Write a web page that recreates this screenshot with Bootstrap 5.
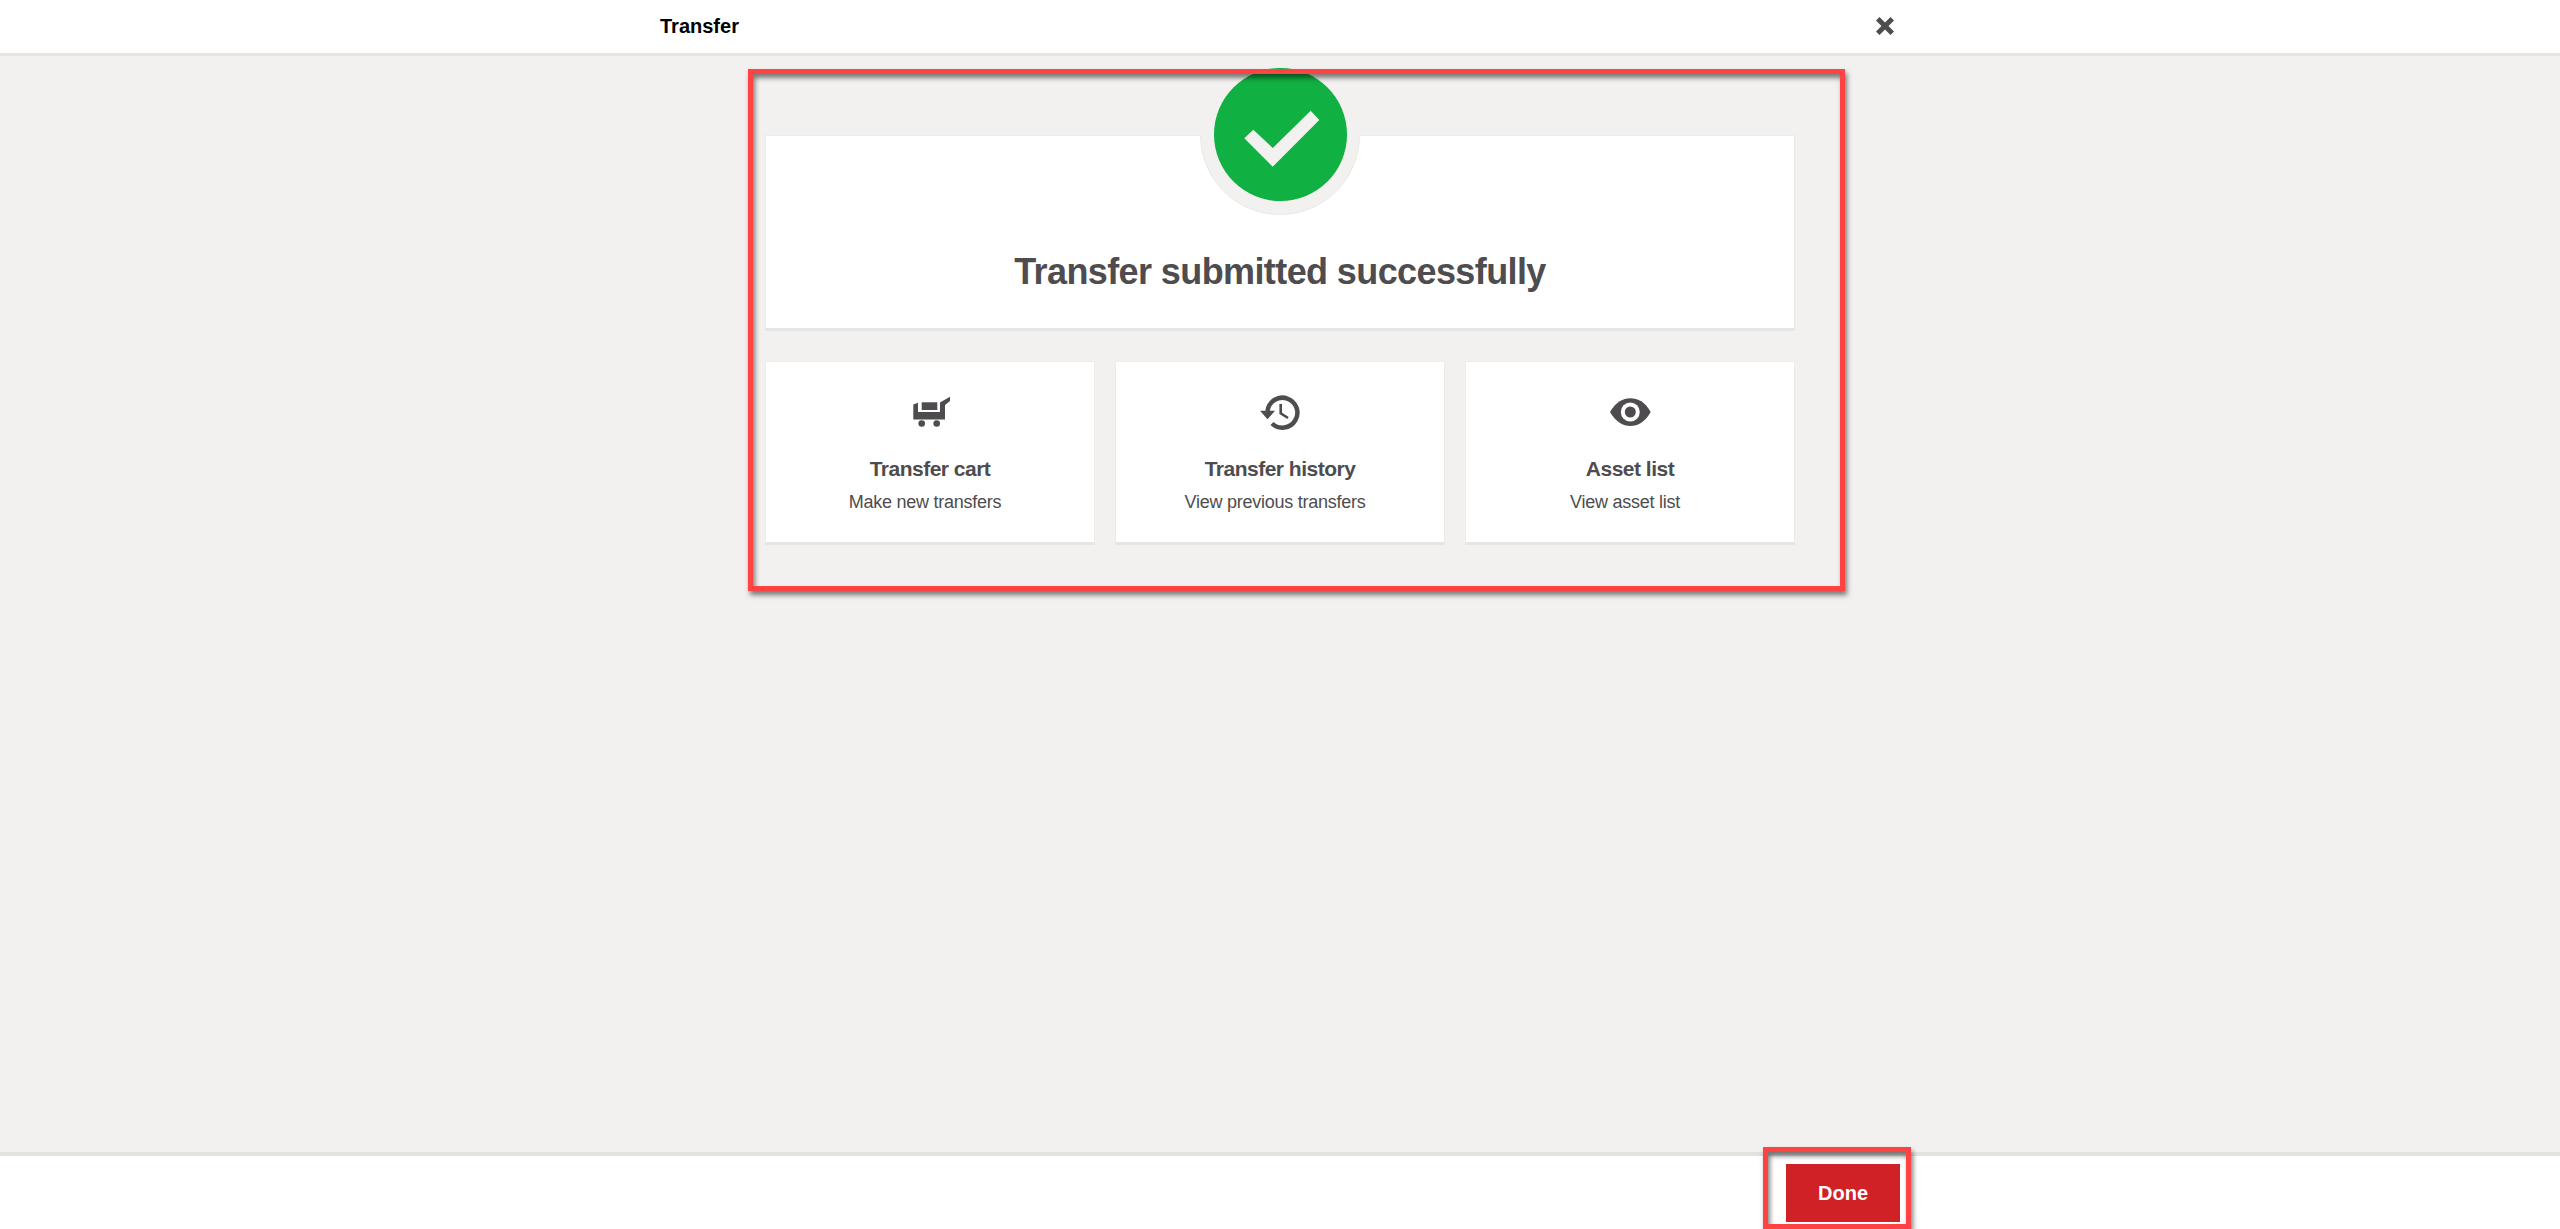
<!DOCTYPE html>
<html lang="en">
<head>
<meta charset="utf-8">
<title>Transfer</title>
<link href="https://cdn.jsdelivr.net/npm/bootstrap@5.3.0/dist/css/bootstrap.min.css" rel="stylesheet">
<style>
html,body{height:100%;}
body{font-family:"Liberation Sans",Arial,sans-serif;background:#f2f1ef;color:#4e4c4e;overflow:hidden;}
.page-shell{height:1229px;}
.top-bar{height:56px;background:#fff;border-bottom:3px solid #e6e5e3;}
.bar-inner{width:1240px;}
.top-bar .bar-inner{padding-bottom:2px;}
.top-title{font-size:20px;font-weight:700;color:#000;}
.close-x{margin-right:6px;line-height:0;}
.content-area{padding-top:79px;}
.content-wrap{width:1030px;}
.panel{border:1px solid #ecebe9;border-bottom:3px solid #e6e5e3;border-radius:0;background:#fff;}
.hero-panel{height:196px;padding-top:114px;}
.hero-title{font-size:36px;letter-spacing:-.6px;font-weight:700;line-height:44px;margin:0;color:#4e4c4e;}
.badge-ring{left:50%;top:-81px;width:160px;height:160px;margin-left:-80px;border-radius:50%;background:#f2f1ef;border:1px solid #e9e8e6;clip-path:inset(80px -2px -2px -2px);}
.badge-circle{left:50%;top:-68px;width:133px;height:133px;margin-left:-66px;border-radius:50%;background:#10b042;}
.tile-row{gap:20px;margin-top:30px;}
.tile{width:330px;height:184px;padding-top:18px;}
.tile svg{display:block;margin:0 auto;}
.tile-title{font-size:21px;letter-spacing:-.5px;font-weight:700;line-height:26px;margin-top:16px;color:#4e4c4e;}
.tile-sub{font-size:18px;letter-spacing:-.25px;line-height:24px;margin-top:8px;padding-right:10px;color:#4e4c4e;}
.mark-box{border:5px solid #ff4343;box-shadow:2px 4px 5px rgba(0,0,0,.5),inset 2px 4px 5px rgba(0,0,0,.5);pointer-events:none;}
.mark-main{left:-17px;right:-50px;top:-66px;bottom:-46px;}
.mark-done{left:-23px;right:-11px;top:-17px;bottom:-7px;}
.bottom-bar{height:77px;background:#fff;border-top:4px solid #e3e2de;padding-top:8px;}
.done-btn{width:114px;height:58px;padding:0;background:#d02126;border:0;border-radius:0;color:#fff;font-size:20px;font-weight:700;}
.done-btn:hover{background:#d02126;color:#fff;}
</style>
</head>
<body>
<div class="page-shell d-flex flex-column">
  <header class="top-bar d-flex justify-content-center flex-shrink-0">
    <div class="bar-inner d-flex justify-content-between align-items-center">
      <span class="top-title">Transfer</span>
      <span class="close-x" aria-label="Close">
        <svg width="18" height="18" viewBox="0 0 18 18"><path d="M0 3.500 3.500 0 9 5.500 14.500 0 18 3.500 12.500 9 18 14.500 14.500 18 9 12.500 3.500 18 0 14.500 5.500 9Z" fill="#4e4c4e"/></svg>
      </span>
    </div>
  </header>
  <main class="content-area flex-grow-1">
    <div class="content-wrap mx-auto position-relative">
      <div class="card panel hero-panel position-relative text-center">
        <div class="badge-ring position-absolute"></div>
        <div class="badge-circle position-absolute">
          <svg width="133" height="133" viewBox="-66 -67 133 133"><polygon points="-35.700,3.300 -26.700,-5.300 -7.300,13 30.700,-24.300 39.300,-15 -7.300,31.700" fill="#f2f1ef"/></svg>
        </div>
        <h1 class="hero-title">Transfer submitted successfully</h1>
      </div>
      <div class="tile-row d-flex">
        <div class="card panel tile text-center">
          <svg width="80" height="60" viewBox="0 0 80 60" fill="#4e4c4e">
            <path d="M23.300 24.500 28 22.700V32H50V22.500L60 16.800V21L55 25V39.500H23.300Z"/>
            <rect x="31.700" y="22.300" width="15.600" height="7.700"/>
            <circle cx="31.700" cy="43.500" r="3.300"/><circle cx="46.700" cy="43.500" r="3.300"/>
          </svg>
          <div class="tile-title">Transfer cart</div>
          <div class="tile-sub">Make new transfers</div>
        </div>
        <div class="card panel tile text-center">
          <svg width="80" height="60" viewBox="0 0 80 60" fill="none" stroke="#4e4c4e">
            <path d="M27.500 31A15 15 0 1 1 32 43.500" stroke-width="4.500"/>
            <path d="M40.700 24V33.300L48 38" stroke-width="2.600"/>
            <polygon points="20,30.700 35,30.700 27.500,39.300" fill="#4e4c4e" stroke="none"/>
          </svg>
          <div class="tile-title">Transfer history</div>
          <div class="tile-sub">View previous transfers</div>
        </div>
        <div class="card panel tile text-center">
          <svg width="80" height="60" viewBox="0 0 80 60">
            <path d="M20 32C26 22 33 18.300 40.300 18.300C48 18.300 55 22 60.700 32C55 42 48 46 40.300 46C33 46 26 42 20 32Z" fill="#4e4c4e"/>
            <circle cx="40.300" cy="32" r="9.500" fill="#fff"/>
            <circle cx="40.300" cy="32" r="5.500" fill="#4e4c4e"/>
          </svg>
          <div class="tile-title">Asset list</div>
          <div class="tile-sub">View asset list</div>
        </div>
      </div>
      <div class="mark-box mark-main position-absolute"></div>
    </div>
  </main>
  <footer class="bottom-bar d-flex justify-content-center flex-shrink-0">
    <div class="bar-inner d-flex justify-content-end align-items-start">
      <div class="position-relative">
        <button type="button" class="btn done-btn">Done</button>
        <div class="mark-box mark-done position-absolute"></div>
      </div>
    </div>
  </footer>
</div>
<script src="https://cdn.jsdelivr.net/npm/bootstrap@5.3.0/dist/js/bootstrap.bundle.min.js"></script>
</body>
</html>
